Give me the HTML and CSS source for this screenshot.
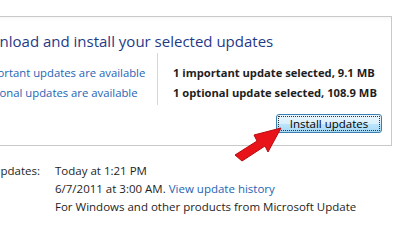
FILE: index.html
```html
<!DOCTYPE html>
<html lang="en">
<head>
    <meta charset="UTF-8">
    <title>Windows Update</title>
    <link rel="stylesheet" href="styles.css">
</head>
<body>
    <div class="page">
        <div class="panel">
            <h2 class="title">Download and install your selected updates</h2>
            <div class="summary">
                <div class="links">
                    <a href="#">Important updates are available</a>
                    <a href="#">Optional updates are available</a>
                </div>
                <div class="selected">
                    <p>1 important update selected, 9.1 MB</p>
                    <p>1 optional update selected, 108.9 MB</p>
                </div>
            </div>
            <div class="actions">
                <button class="install-button"><span>Install updates</span></button>
            </div>
        </div>
        <div class="details">
            <div class="label-col">
                <div class="labels">
                    <div>Most recent check for updates:</div>
                    <div>Updates were installed:</div>
                    <div>You receive updates:</div>
                </div>
            </div>
            <div class="values">
                <div>Today at 1:21 PM</div>
                <div>6/7/2011 at 3:00 AM. <a href="#">View update history</a></div>
                <div>For Windows and other products from Microsoft Update</div>
            </div>
        </div>
        <svg class="arrow" width="60" height="42" viewBox="0 0 60 42">
            <path d="M0 32 L22 18 L19 12 L46 5 L33 29 L30 23 L7 38 Z" fill="#e8141a" stroke="#b80b10" stroke-width="1" stroke-linejoin="round"/>
        </svg>
    </div>
</body>
</html>
```

FILE: styles.css
```css
body {
    margin: 0;
    background-color: white;
    font-family: "Open Sans", "Noto Sans", sans-serif;
    font-size: 11.5px;
    color: #1e1e1e;
    overflow: hidden;
}
.page {
    width: 400px;
    height: 230px;
    position: relative;
    overflow: hidden;
}
.panel {
    margin: 16px 0 0 -40px;
    width: 430px;
    height: 128px;
    border: 1px solid #c9c9c9;
    background: linear-gradient(#f7f7f7, white 4px);
}
.title {
    margin: 0;
    padding: 13px 0 0 7px;
    font-size: 15px;
    font-weight: normal;
    line-height: 22px;
    color: #1f3a87;
    white-space: nowrap;
}
.summary {
    display: flex;
    margin-top: 1px;
}
.links {
    width: 197px;
    display: flex;
    flex-direction: column;
    gap: 4px;
    padding: 12px 0 0 16px;
    border-right: 1px solid #d8d8d8;
    height: 52px;
    box-sizing: border-box;
}
.links a {
    color: #1e64b4;
    text-decoration: none;
    line-height: 16px;
    font-size: 11.3px;
}
.selected {
    padding: 12px 0 0 15px;
}
.selected p {
    margin: 0 0 4px;
    font-weight: bold;
    font-size: 11.2px;
    line-height: 16px;
    white-space: nowrap;
}
.actions {
    display: flex;
    justify-content: flex-end;
    padding: 9px 9px 0 0;
}
.install-button {
    width: 106px;
    height: 19px;
    padding: 1px;
    border: 1px solid #3c7fb1;
    border-radius: 3px;
    background: linear-gradient(#eaf6fd, #d9f0fc 50%, #bee6fd 50%, #a7d9f5);
    font-family: inherit;
    font-size: 11.5px;
    color: black;
    box-sizing: border-box;
}
.install-button span {
    display: block;
    border: 1px dotted #333;
    line-height: 13px;
}
.details {
    display: flex;
    margin-top: 17px;
    line-height: 16px;
}
.label-col {
    width: 40px;
    flex-shrink: 0;
    display: flex;
    justify-content: flex-end;
}
.labels {
    flex-shrink: 0;
    display: flex;
    flex-direction: column;
    align-items: flex-start;
    gap: 2px;
    white-space: nowrap;
}
.values {
    margin-left: 15px;
    display: flex;
    flex-direction: column;
    gap: 2px;
    white-space: nowrap;
}
.values a {
    color: #1e64b4;
    text-decoration: none;
}
.arrow {
    position: absolute;
    left: 235px;
    top: 123px;
}
```
